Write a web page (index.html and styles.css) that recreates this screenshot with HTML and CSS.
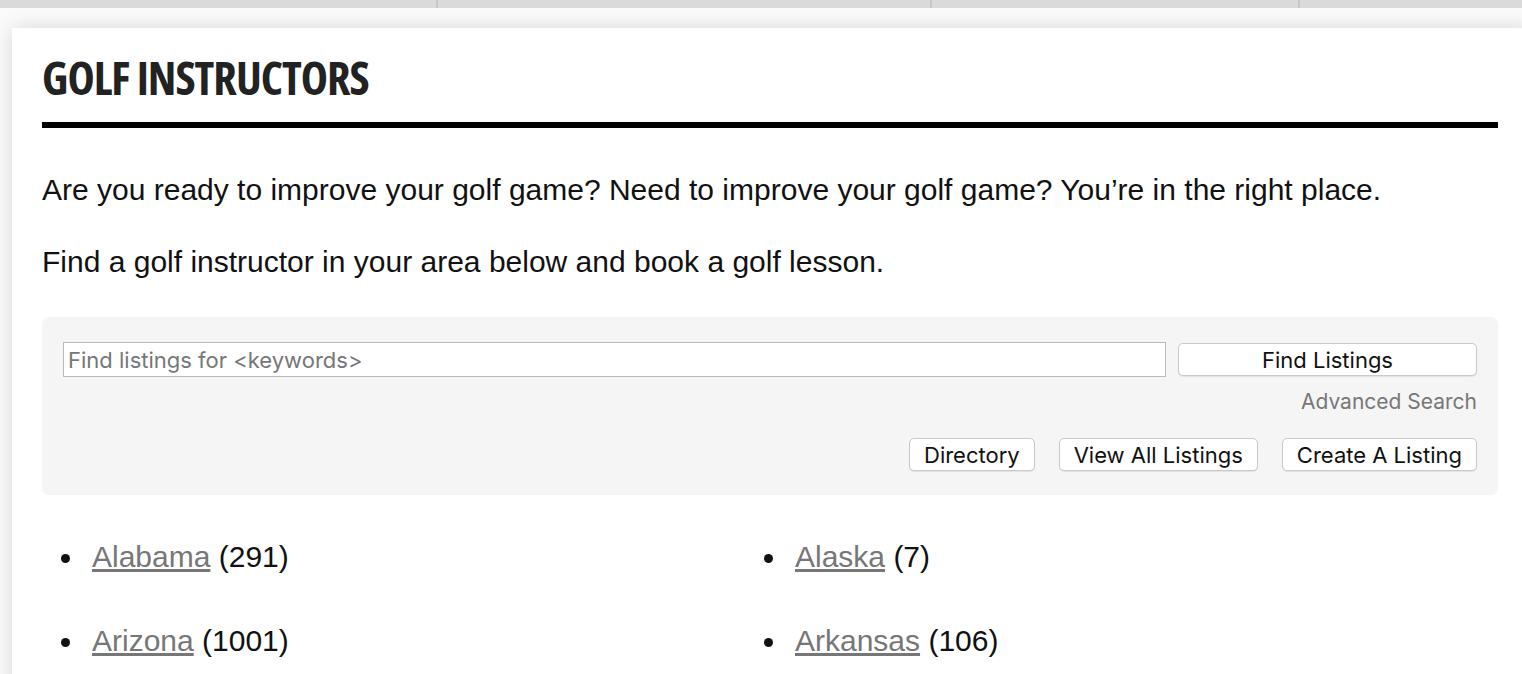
FILE: index.html
```html
<!DOCTYPE html>
<html>
<head>
<meta charset="utf-8">
<link rel="stylesheet" href="styles.css">
</head>
<body>
<div class="topbar">
  <span class="tab t1"></span>
  <span class="tab t2"></span>
  <span class="tab t3"></span>
  <span class="tab t4"></span>
</div>
<div class="page">
  <main class="card">
    <h1 class="title">GOLF INSTRUCTORS</h1>
    <p class="lead">Are you ready to improve your golf game? Need to improve your golf game? You’re in the right place.</p>
    <p class="lead">Find a golf instructor in your area below and book a golf lesson.</p>
    <form class="search">
      <div class="search-row">
        <input class="search-input" type="text" placeholder="Find listings for <keywords>">
        <button class="btn btn-find" type="button">Find Listings</button>
      </div>
      <div class="adv-row"><a class="adv" href="#">Advanced Search</a></div>
      <div class="actions">
        <button class="btn" type="button">Directory</button>
        <button class="btn" type="button">View All Listings</button>
        <button class="btn" type="button">Create A Listing</button>
      </div>
    </form>
    <ul class="states">
      <li><a href="#">Alabama</a> (291)</li>
      <li><a href="#">Alaska</a> (7)</li>
      <li><a href="#">Arizona</a> (1001)</li>
      <li><a href="#">Arkansas</a> (106)</li>
    </ul>
  </main>
</div>
</body>
</html>
```

FILE: styles.css
```css
html, body {
  margin: 0;
  padding: 0;
  background: #ffffff;
  overflow: hidden;
}
body {
  font-family: "Liberation Sans", Arial, sans-serif;
  color: #111;
}
.topbar {
  height: 8px;
  background: #dadada;
  display: flex;
}
.tab {
  height: 8px;
  border-right: 2px solid #c8c8c8;
}
.t1 { width: 436px; }
.t2 { width: 492px; }
.t3 { width: 366px; }
.t4 { flex: 1; border-right: 0; }
.page {
  padding: 20px 0 0 12px;
  background: #fbfbfb;
}
.card {
  background: #fff;
  box-shadow: 0 0 20px rgba(0, 0, 0, 0.15);
  padding: 16px 34px 40px 30px;
  margin-right: -10px;
}
.title {
  margin: 0;
  font-family: "Open Sans", sans-serif;
  font-weight: 700;
  font-stretch: condensed;
  font-size: 46px;
  line-height: 66px;
  letter-spacing: -1px;
  color: #222;
  border-bottom: 6px solid #000;
  padding-bottom: 12px;
}
.lead {
  margin: 0;
  font-size: 30px;
  line-height: 34px;
  color: #111;
}
.title + .lead { margin-top: 45px; }
.lead + .lead { margin-top: 38px; }
.search {
  margin-top: 38px;
  background: #f5f5f5;
  border-radius: 7px;
  padding: 25px 21px 24px 21px;
}
.search-row {
  display: flex;
  gap: 12px;
  align-items: center;
}
.search-input {
  flex: 1;
  height: 35px;
  box-sizing: border-box;
  border: 1px solid #b9b9b9;
  background: #fff;
  font-family: "Inter", "Liberation Sans", sans-serif;
  font-size: 22px;
  padding: 0 4px;
  margin: 0;
  border-radius: 0;
  outline: none;
}
.search-input::placeholder { color: #777; }
.btn {
  font-family: "Inter", "Liberation Sans", sans-serif;
  font-size: 22px;
  color: #111;
  background: #fff;
  border: 1px solid #c9c9c9;
  border-radius: 5px;
  box-shadow: 0 1px 1px rgba(0, 0, 0, 0.08);
  height: 33px;
  padding: 0 14px;
  margin: 0;
}
.btn-find {
  width: 299px;
}
.adv-row {
  display: flex;
  justify-content: flex-end;
  margin-top: 13px;
}
.adv {
  color: #777;
  font-family: "Inter", "Liberation Sans", sans-serif;
  font-size: 21px;
  text-decoration: none;
  line-height: 24px;
}
.actions {
  display: flex;
  justify-content: flex-end;
  gap: 24px;
  margin-top: 24px;
}
.states {
  list-style: none;
  margin: 45px 0 0 0;
  padding: 0 0 0 50px;
  display: grid;
  grid-template-columns: 1fr 1fr;
  row-gap: 50px;
  font-size: 30px;
  line-height: 34px;
}
.states li::before {
  content: "";
  display: inline-block;
  width: 9px;
  height: 9px;
  border-radius: 50%;
  background: #111;
  margin-left: -31px;
  margin-right: 22px;
  vertical-align: 4px;
}
.states a {
  color: #777;
  text-decoration: underline;
}
```
